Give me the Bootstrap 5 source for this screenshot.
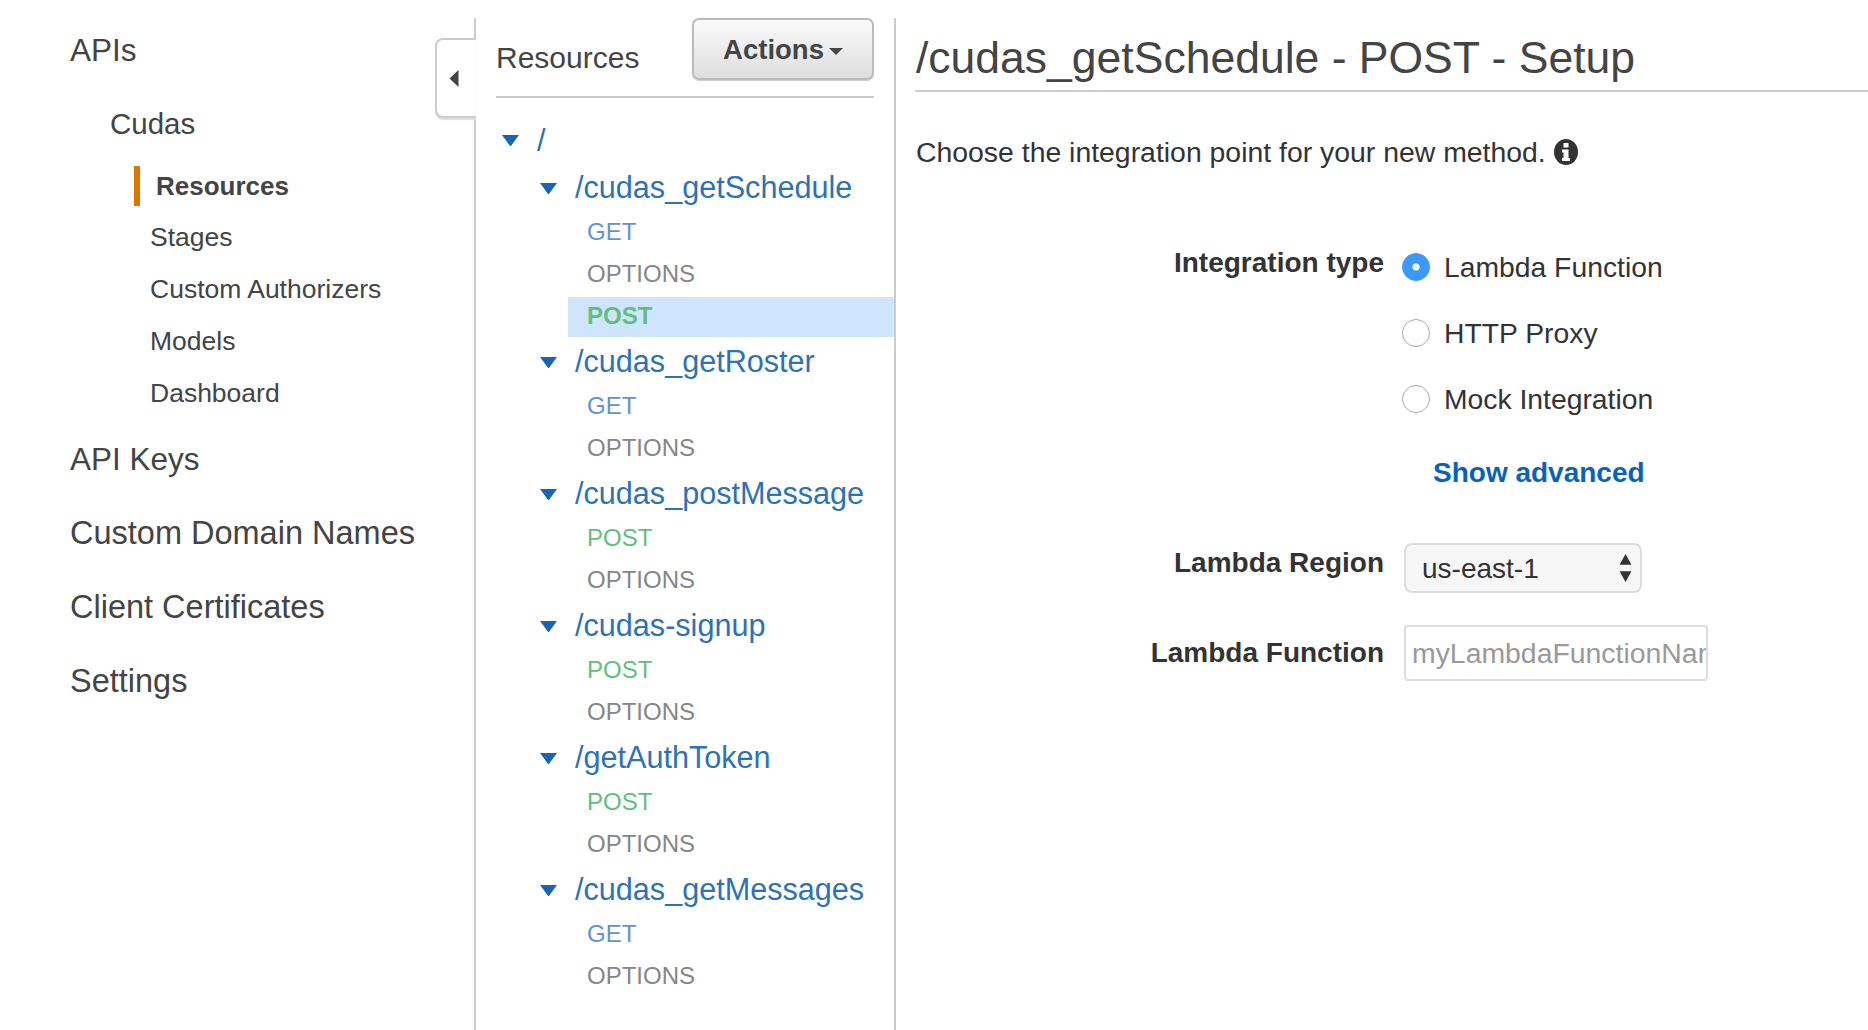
<!DOCTYPE html>
<html lang="en">
<head>
  <meta charset="UTF-8">
  <meta name="viewport" content="width=device-width, initial-scale=1.0">
  <title>API Gateway</title>
  <link href="https://cdn.jsdelivr.net/npm/bootstrap@5.3.0/dist/css/bootstrap.min.css" rel="stylesheet">
  <style>
    html, body { height: 100%; overflow: hidden; }
    body { font-family: "Liberation Sans", Arial, sans-serif; color: #444; background: #fff; }
    .shell { height: 100%; padding-top: 18px; }

    /* left nav */
    .side-pane { width: 476px; flex: none; border-right: 2px solid #ccc; position: relative; }
    .side-list { padding-left: 70px; }
    .side-top { font-size: 32.5px; line-height: 74px; color: #444; text-decoration: none; display: block; }
    .side-first { font-size: 31.5px; line-height: 64px; }
    .side-keys { font-size: 31.5px; margin-top: 3px; }
    .side-api { padding-left: 40px; margin-top: 5px; }
    .side-api .side-top { font-size: 29.5px; }
    .side-sub { display: block; font-size: 26.5px; line-height: 52px; padding-left: 80px; color: #444; text-decoration: none; }
    .side-active { position: relative; font-weight: 700; font-size: 26px; line-height: 50px; padding-left: 86px; }
    .side-active::before { content: ""; position: absolute; left: 64px; top: 5px; width: 6px; height: 40px; background: #e07400; }
    .collapse-tab { position: absolute; right: -2px; top: 20px; width: 41px; height: 80px; background: #fff; border: 2px solid #ccc; border-right: 0; border-radius: 8px 0 0 8px; box-shadow: 0 2px 1px #ddd; padding: 0 6px 0 0; display: flex; align-items: center; justify-content: center; }

    /* resource tree */
    .tree-pane { width: 420px; flex: none; border-right: 2px solid #ccc; }
    .tree-head { margin: 0 20px 0 20px; height: 80px; border-bottom: 2px solid #ccc; }
    .tree-title { font-size: 30px; line-height: 1; padding-top: 25px; }
    .actions-btn { width: 182px; height: 62px; font-size: 27.5px; font-weight: 700; color: #444; padding: 2px 0 0; background: linear-gradient(#fbfbfb, #dedede); border: 2px solid #bbb; border-radius: 7px; box-shadow: 0 1px 1px #ccc; }
    .actions-btn.dropdown-toggle::after { border-top-width: 7px; border-left-width: 7px; border-right-width: 7px; margin-left: 5px; vertical-align: 4px; color: #444; }
    .tree-root { padding-top: 19px; }
    .tree-row { display: flex; align-items: center; text-decoration: none; color: #2c72b5; font-size: 30.6px; height: 46px; }
    .tree-row svg { flex: none; }
    .tree-row.lvl0 { padding-left: 26px; gap: 18px; height: 47px; margin-bottom: 1px; }
    .tree-row.lvl1 { padding-left: 64px; gap: 18px; }
    .tree-group { margin-bottom: 2px; }
    .tree-method { display: block; font-size: 24px; height: 42px; line-height: 42px; padding-left: 111px; text-decoration: none; }
    .tree-method.is-get { color: #6394c6; }
    .tree-method.is-options { color: #868686; }
    .tree-method.is-post { color: #63bd7f; }
    .tree-method.is-current { background: #cfe5fd; font-weight: 700; margin-left: 92px; padding-left: 19px; height: 40px; line-height: 38px; margin-top: 2px; }

    /* setup form */
    .setup-pane { flex: 1 1 auto; min-width: 0; }
    .setup-head { margin: 0 0 0 19px; height: 74px; padding: 8px 0 0 1px; border-bottom: 2px solid #ccc; font-size: 44.5px; font-weight: 400; line-height: 64px; color: #444; }
    .setup-intro { margin: 40px 0 0 20px; font-size: 28.4px; line-height: 40px; color: #333; display: flex; align-items: center; gap: 8px; }
    .field-row { display: flex; }
    .field-label { width: 488px; flex: none; text-align: right; font-weight: 700; font-size: 28px; line-height: 40px; color: #333; margin: 0; }
    .field-body { margin-left: 20px; }
    .radio-stack { margin-top: 62px; }
    .radio-stack .field-label { padding-top: 9px; }
    .radio-item { display: flex; align-items: center; height: 66px; margin: 0 0 0 -2px; padding: 0; gap: 14px; }
    .radio-item .form-check-input { width: 28px; height: 28px; margin: 0; border: 1px solid #aaa; float: none; flex: none; }
    .radio-item .form-check-input:checked { background-color: #3b99fc; border-color: #3b99fc; background-image: url("data:image/svg+xml,%3csvg xmlns='http://www.w3.org/2000/svg' viewBox='-4 -4 8 8'%3e%3ccircle r='1.1' fill='%23fff'/%3e%3c/svg%3e"); }
    .radio-item .form-check-label { font-size: 28.3px; color: #333; }
    .advanced-link { display: block; font-size: 28px; font-weight: 700; color: #0a62b8; text-decoration: none; margin: 21px 0 0 537px; line-height: 40px; }
    .region-row { margin-top: 50px; }
    .function-row { margin-top: 32px; }
    .region-select { width: 238px; height: 50px; font-size: 28px; padding: 2px 30px 0 16px; color: #333; background-color: #f7f7f7; border: 2px solid #ddd; border-radius: 8px; background-image: url("data:image/svg+xml,%3csvg xmlns='http://www.w3.org/2000/svg' viewBox='0 0 12 26'%3e%3cpath d='M6 0l5.500 10H.5zM6 26L.5 16h11z' fill='%23333'/%3e%3c/svg%3e"); background-size: 13px 28px; background-position: right 8px center; }
    .name-input { width: 304px; height: 56px; font-size: 28.4px; padding: 0 0 0 6px; color: #333; border: 2px solid #ddd; border-radius: 4px; }
    .name-input::placeholder { color: #999; opacity: 1; }
  </style>
</head>
<body>
  <div class="shell d-flex">

    <!-- Left nav -->
    <aside class="side-pane">
      <nav class="side-list">
        <a href="#" class="side-top side-first">APIs</a>
        <div class="side-api">
          <a href="#" class="side-top">Cudas</a>
        </div>
        <a href="#" class="side-sub side-active">Resources</a>
        <a href="#" class="side-sub">Stages</a>
        <a href="#" class="side-sub">Custom Authorizers</a>
        <a href="#" class="side-sub">Models</a>
        <a href="#" class="side-sub">Dashboard</a>
        <a href="#" class="side-top side-keys">API Keys</a>
        <a href="#" class="side-top">Custom Domain Names</a>
        <a href="#" class="side-top">Client Certificates</a>
        <a href="#" class="side-top">Settings</a>
      </nav>
      <button type="button" class="collapse-tab" aria-label="Collapse">
        <svg width="10" height="17" viewBox="0 0 10 17"><path d="M9.500 0v17L.5 8.500z" fill="#444"/></svg>
      </button>
    </aside>

    <!-- Resource tree -->
    <section class="tree-pane">
      <div class="tree-head d-flex justify-content-between">
        <div class="tree-title">Resources</div>
        <button type="button" class="btn actions-btn dropdown-toggle">Actions</button>
      </div>
      <div class="tree-root">
        <a href="#" class="tree-row lvl0"><svg width="17" height="11" viewBox="0 0 17 11"><path d="M0 0h17L9.300 10.400a1 1 0 0 1-1.600 0z" fill="#1565b8"/></svg>/</a>
        <div id="tree"></div>
      </div>
    </section>

    <!-- Setup form -->
    <main class="setup-pane">
      <h1 class="setup-head">/cudas_getSchedule - POST - Setup</h1>
      <p class="setup-intro">Choose the integration point for your new method.
        <svg width="24" height="26" viewBox="0 0 24 26"><ellipse cx="12" cy="13" rx="12" ry="13" fill="#333"/><rect x="9.500" y="4" width="5" height="4.500" fill="#fff"/><path d="M8 10.500h6.500V19H16v3H8v-3h1.500v-5.500H8z" fill="#fff"/></svg>
      </p>

      <form>
        <div class="field-row radio-stack">
          <label class="field-label">Integration type</label>
          <div class="field-body">
            <div class="form-check radio-item">
              <input class="form-check-input" type="radio" name="itype" id="it1" checked>
              <label class="form-check-label" for="it1">Lambda Function</label>
            </div>
            <div class="form-check radio-item">
              <input class="form-check-input" type="radio" name="itype" id="it2">
              <label class="form-check-label" for="it2">HTTP Proxy</label>
            </div>
            <div class="form-check radio-item">
              <input class="form-check-input" type="radio" name="itype" id="it3">
              <label class="form-check-label" for="it3">Mock Integration</label>
            </div>
          </div>
        </div>
        <a href="#" class="advanced-link">Show advanced</a>
        <div class="field-row region-row">
          <label class="field-label" for="region">Lambda Region</label>
          <div class="field-body">
            <select class="form-select region-select" id="region"><option>us-east-1</option></select>
          </div>
        </div>
        <div class="field-row align-items-center function-row">
          <label class="field-label" for="fname">Lambda Function</label>
          <div class="field-body">
            <input class="form-control name-input" id="fname" placeholder="myLambdaFunctionName">
          </div>
        </div>
      </form>
    </main>
  </div>

  <script src="https://cdn.jsdelivr.net/npm/bootstrap@5.3.0/dist/js/bootstrap.bundle.min.js"></script>
  <script>
    const resources = [
      ['/cudas_getSchedule', ['GET', 'OPTIONS', 'POST*']],
      ['/cudas_getRoster', ['GET', 'OPTIONS']],
      ['/cudas_postMessage', ['POST', 'OPTIONS']],
      ['/cudas-signup', ['POST', 'OPTIONS']],
      ['/getAuthToken', ['POST', 'OPTIONS']],
      ['/cudas_getMessages', ['GET', 'OPTIONS']]
    ];
    const caret = '<svg width="17" height="11" viewBox="0 0 17 11"><path d="M0 0h17L9.300 10.400a1 1 0 0 1-1.600 0z" fill="#1565b8"/></svg>';
    document.getElementById('tree').innerHTML = resources.map(([path, methods]) => {
      const rows = methods.map((m) => {
        const current = m.endsWith('*');
        const name = m.replace('*', '');
        return `<a href="#" class="tree-method is-${name.toLowerCase()}${current ? ' is-current' : ''}">${name}</a>`;
      }).join('');
      return `<div class="tree-group"><a href="#" class="tree-row lvl1">${caret}${path}</a>${rows}</div>`;
    }).join('');
  </script>
</body>
</html>
